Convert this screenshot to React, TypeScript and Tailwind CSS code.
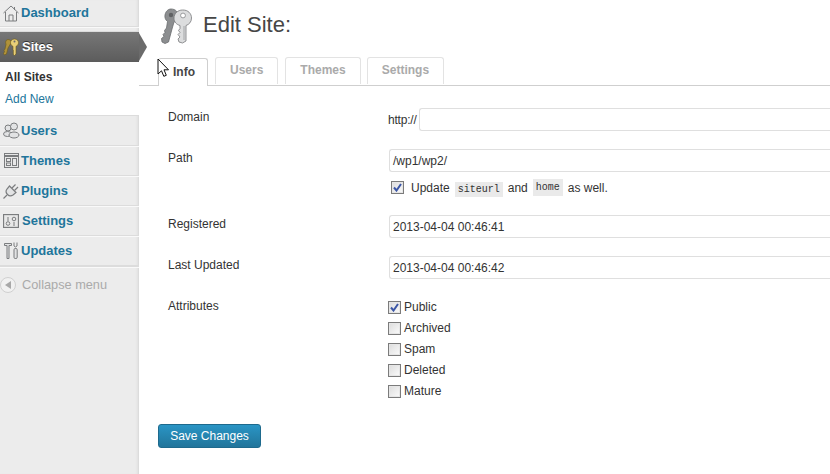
import React from "react";

const GoldKeys = () => (
  <svg width="18" height="18" viewBox="0 0 18 18">
    <path d="M6 1.500c2 0 3.500 1.500 3 3.500l-3 5-1.500 6-2 1-1-1.500 1-2-.5-1 1-1.500L4 6.500C3 4 4 1.500 6 1.500z" fill="#b0923a" stroke="#6d5a1a" strokeWidth="0.6" />
    <path d="M12.500 1c2.500 0 4 1.800 4 3.800 0 1.800-1.200 3-2.500 3.500V16l-1.500 1.500-1.500-1.500.7-1-.7-1 .7-1-.7-1V8.300c-1.300-.5-2.500-1.700-2.500-3.500C8.500 2.800 10 1 12.500 1z" fill="#e8cf78" stroke="#6d5a1a" strokeWidth="0.6" />
    <circle cx="12.500" cy="3.600" r="1" fill="#6b6b6b" />
  </svg>
);

const BigKeys = () => (
  <svg width="36" height="36" viewBox="0 0 36 36">
    <path d="M13 1c4.500 0 7.500 3 7 7.500-.4 3-2 4.500-4 5.500l-2 7-3.500 13-3.500 1.500L4 34l-.5-3.500L6 28.500l-1-2 2-2-.5-2 2-2.500 1-6.500C7.500 12 6.500 9.500 7 7c.6-3.500 3-6 6-6z" fill="#8c8e90" stroke="#6a6c6e" strokeWidth="0.8" />
    <circle cx="13" cy="7" r="2.200" fill="#5f6163" />
    <path d="M25 2c5 0 8.500 3.500 8.500 8 0 4-2.500 6.500-5.500 7.500V33l-3.500 2-3.500-1-1-3 2-2-2-2.500 2-2-1.500-2 1.500-2v-3c-3.500-1-6-3.500-6-7.500 0-4.500 4-8 8.500-8z" fill="#dcddde" stroke="#77797b" strokeWidth="0.8" />
    <circle cx="25" cy="7.500" r="2.400" fill="#fff" stroke="#77797b" strokeWidth="0.7" />
    <path d="M26 18v14" stroke="#a4a6a8" strokeWidth="1" />
  </svg>
);

const C = "#7b7d7f";

const Home = () => (
  <svg width="16" height="18" viewBox="0 0 16 18" fill="none" stroke={C} strokeWidth="1">
    <path d="M0.500 9 8 2l7.500 7M2.500 8v9h11V8M6 17v-6h4v6M11.500 3v3" />
  </svg>
);
const UsersIcon = () => (
  <svg width="17" height="17" viewBox="0 0 17 17" fill="#e2e3e4" stroke={C} strokeWidth="1">
    <circle cx="5" cy="6" r="3" />
    <circle cx="11" cy="4.500" r="3.500" />
    <ellipse cx="4.500" cy="12" rx="4" ry="2.500" />
    <ellipse cx="11" cy="13" rx="5" ry="3" />
  </svg>
);
const ThemesIcon = () => (
  <svg width="15" height="15" viewBox="0 0 15 15" fill="none" stroke={C} strokeWidth="1">
    <rect x="0.500" y="0.500" width="14" height="14" fill="#e8e8e8" />
    <path d="M0.500 3h14" strokeWidth="2" />
    <rect x="2.500" y="5.500" width="4" height="3" />
    <rect x="2.500" y="10" width="4" height="2.500" />
    <rect x="8.500" y="5.500" width="4" height="7" />
  </svg>
);
const PluginsIcon = () => (
  <svg width="17" height="17" viewBox="0 0 17 17" fill="none" stroke={C} strokeWidth="1.200">
    <path d="M6.500 4l6.500 6.500-3 2.500c-2 1.300-4 1-5.500-.5S2.500 9 4 7z" fill="#e2e3e4" />
    <path d="M9 6l3.500-3.500M11.500 8.500 15 5M4 13l-3.500 3.500" />
  </svg>
);
const SettingsIcon = () => (
  <svg width="16" height="14" viewBox="0 0 16 14" fill="none" stroke={C} strokeWidth="1">
    <rect x="0.500" y="0.500" width="15" height="13" fill="#e8e8e8" strokeWidth="1.300" />
    <path d="M5 3v4M11 8v4" />
    <circle cx="5" cy="9.500" r="1.800" />
    <circle cx="11" cy="5" r="1.800" />
  </svg>
);
const UpdatesIcon = () => (
  <svg width="15" height="17" viewBox="0 0 15 17" fill="none" stroke={C} strokeWidth="1">
    <path d="M0.500 1.500h7v2h-2.500v13h-2v-13h-2.500z" fill="#e2e3e4" />
    <path d="M10 0.500v3.500l1.500 1 1.500-1v-3.500" />
    <rect x="10" y="6.500" width="3.200" height="10" rx="1.200" fill="#e2e3e4" />
  </svg>
);

const Item = ({ icon, label, extra = "", textExtra = "" }: { icon: React.ReactNode; label: string; extra?: string; textExtra?: string }) => (
  <div className={`flex items-center border-b border-[#dcdcdc] shadow-[0_1px_0_#f9f9f9] ${extra}`}>
    <span className="flex w-[21px] shrink-0 justify-center pl-px">{icon}</span>
    <span className={`text-[13px] font-bold text-[#21759b] ${textExtra}`}>{label}</span>
  </div>
);

const Tab = ({ label, active, extra = "" }: { label: string; active?: boolean; extra?: string }) => (
  <div
    className={
      active
        ? "relative top-px flex h-[28px] w-[50px] items-center rounded-t-[3px] border border-b-0 border-[#cfcfcf] bg-white pb-[2px] pl-[14px] text-xs font-bold text-[#464646]"
        : `flex h-[27px] items-center justify-center rounded-t-[3px] border border-b-0 border-[#e3e3e3] px-[14px] pb-[2px] text-xs font-bold text-[#aaaaaa] ${extra}`
    }
  >
    {label}
  </div>
);

const Check = ({ checked }: { checked?: boolean }) => (
  <span className="flex h-[13px] w-[13px] shrink-0 items-center justify-center border border-[#7b7b7b] bg-gradient-to-br from-[#dcdcdc] to-[#fbfbfb] shadow-[inset_0_0_0_1px_#e6e6e6]">
    {checked && (
      <svg width="9" height="9" viewBox="0 0 9 9" fill="none" stroke="#3b56a6" strokeWidth="2">
        <path d="M1 4.500 3.500 7.500 8 1" />
      </svg>
    )}
  </span>
);

const Field = ({ value = "" }: { value?: string }) => (
  <div className="flex h-[23px] min-w-0 flex-1 items-center rounded-l-[3px] border border-r-0 border-[#dfdfdf] bg-white pl-[3px] text-xs text-[#333333]">
    {value}
  </div>
);

const Row = ({ label, h, children }: { label: string; h: string; children: React.ReactNode }) => (
  <div className={`flex ${h}`}>
    <div className="w-[220px] shrink-0 text-xs leading-[18px] text-[#333333]">{label}</div>
    <div className="flex min-w-0 flex-1 flex-col">{children}</div>
  </div>
);

const Code = ({ children }: { children: string }) => (
  <code className="bg-[#eaeaea] px-[3px] py-[2px] font-['Liberation_Mono',monospace] text-[10px] text-[#333333]">{children}</code>
);

export default function App() {
  return (
    <div className="relative flex h-[474px] w-[830px] overflow-hidden bg-white font-['Liberation_Sans',Arial,sans-serif]">
      <aside className="relative flex w-[139px] shrink-0 flex-col bg-[#ececec] shadow-[inset_-3px_0_3px_-2px_#d4d4d4]">
        <Item icon={<Home />} label="Dashboard" extra="h-[27px] pb-px" />
        <div className="h-[5px] border-b border-[#dcdcdc]" />
        <div className="flex h-[30px] items-center bg-gradient-to-b from-[#777777] to-[#5c5c5c]">
          <span className="flex w-[22px] shrink-0 justify-center">
            <GoldKeys />
          </span>
          <span className="text-[13px] font-bold text-white [text-shadow:0_-1px_0_#333]">Sites</span>
        </div>
        <div className="flex h-[54px] flex-col border-b border-[#dcdcdc] bg-white pl-[5px] pt-[4px] text-xs leading-[22px]">
          <span className="font-bold text-[#333333]">All Sites</span>
          <span className="text-[#21759b]">Add New</span>
        </div>
        <Item icon={<UsersIcon />} label="Users" extra="h-[30px]" />
        <Item icon={<ThemesIcon />} label="Themes" extra="h-[30px]" />
        <Item icon={<PluginsIcon />} label="Plugins" extra="h-[30px]" />
        <Item icon={<SettingsIcon />} label="Settings" extra="h-[30px]" textExtra="ml-px" />
        <Item icon={<UpdatesIcon />} label="Updates" extra="h-[31px] border-b-2" />
        <div className="mt-[6px] flex items-center gap-[6px] pt-[2px] text-[12.75px] text-[#aaaaaa]">
          <span className="flex h-4 w-4 items-center justify-center rounded-full border border-[#d0d0d0] bg-[#f1f1f1]">
            <span className="mr-px h-0 w-0 border-y-[4px] border-r-[6px] border-y-transparent border-r-[#a8a8a8]" />
          </span>
          Collapse menu
        </div>
        <svg className="absolute left-[139px] top-[33px]" width="8" height="28" viewBox="0 0 8 28">
          <path d="M0 0 8 14 0 28z" fill="#6b6b6b" />
        </svg>
      </aside>

      <main className="flex min-w-0 flex-1 flex-col">
        <div className="flex h-[57px] items-start gap-[9px] pl-[19px] pt-[8px]">
          <BigKeys />
          <h1 className="pt-[2px] text-[22px] leading-[29px] text-[#464646]">Edit Site:</h1>
        </div>
        <div className="flex gap-[7px] border-b border-[#cfcfcf] pl-[19px]">
          <Tab label="Info" active />
          <Tab label="Users" />
          <Tab label="Themes" extra="mr-[-1px]" />
          <Tab label="Settings" />
        </div>
        <div className="flex flex-col pl-[19px] pt-[22px]">
          <div className="flex flex-col pl-[10px]">
            <Row label="Domain" h="h-[41px]">
              <div className="flex items-center">
                <span className="w-[31px] shrink-0 text-xs tracking-[-0.2px] text-[#333333]">http://</span>
                <Field />
              </div>
            </Row>
            <Row label="Path" h="h-[66px]">
              <div className="flex pl-px"><Field value="/wp1/wp2/" /></div>
              <div className="mt-[7px] flex items-center pl-[3px] text-xs text-[#333333]">
                <Check checked />
                <span className="ml-[7px]">Update</span>
                <span className="ml-[5px]"><Code>siteurl</Code></span>
                <span className="mx-[5px]">and</span>
                <Code>home</Code>
                <span className="ml-[5px]">as well.</span>
              </div>
            </Row>
            <Row label="Registered" h="h-[41px]">
              <div className="flex pl-px"><Field value="2013-04-04 00:46:41" /></div>
            </Row>
            <Row label="Last Updated" h="h-[41px]">
              <div className="flex pl-px"><Field value="2013-04-04 00:46:42" /></div>
            </Row>
            <Row label="Attributes" h="h-[127px]">
              <div className="flex flex-col text-xs leading-[21px] text-[#333333]">
                {([["Public", true], ["Archived", false], ["Spam", false], ["Deleted", false], ["Mature", false]] as [string, boolean][]).map(([l, c]) => (
                  <div key={l} className="flex h-[21px] items-center gap-[3px]">
                    <Check checked={c} />
                    <span>{l}</span>
                  </div>
                ))}
              </div>
            </Row>
          </div>
          <button className="flex h-6 w-[103px] items-center justify-center rounded-[3px] border border-[#1e6a8d] bg-gradient-to-b from-[#2a95c5] to-[#21759b] text-xs text-white">
            Save Changes
          </button>
        </div>
      </main>

      <svg className="absolute left-[157px] top-[58px]" width="13" height="21" viewBox="0 0 13 21">
        <path d="M1 1v15l3.500-3.200 2.300 5.500 2.500-1-2.300-5.500h4.500z" fill="#fff" stroke="#111" strokeWidth="1" />
      </svg>
    </div>
  );
}
